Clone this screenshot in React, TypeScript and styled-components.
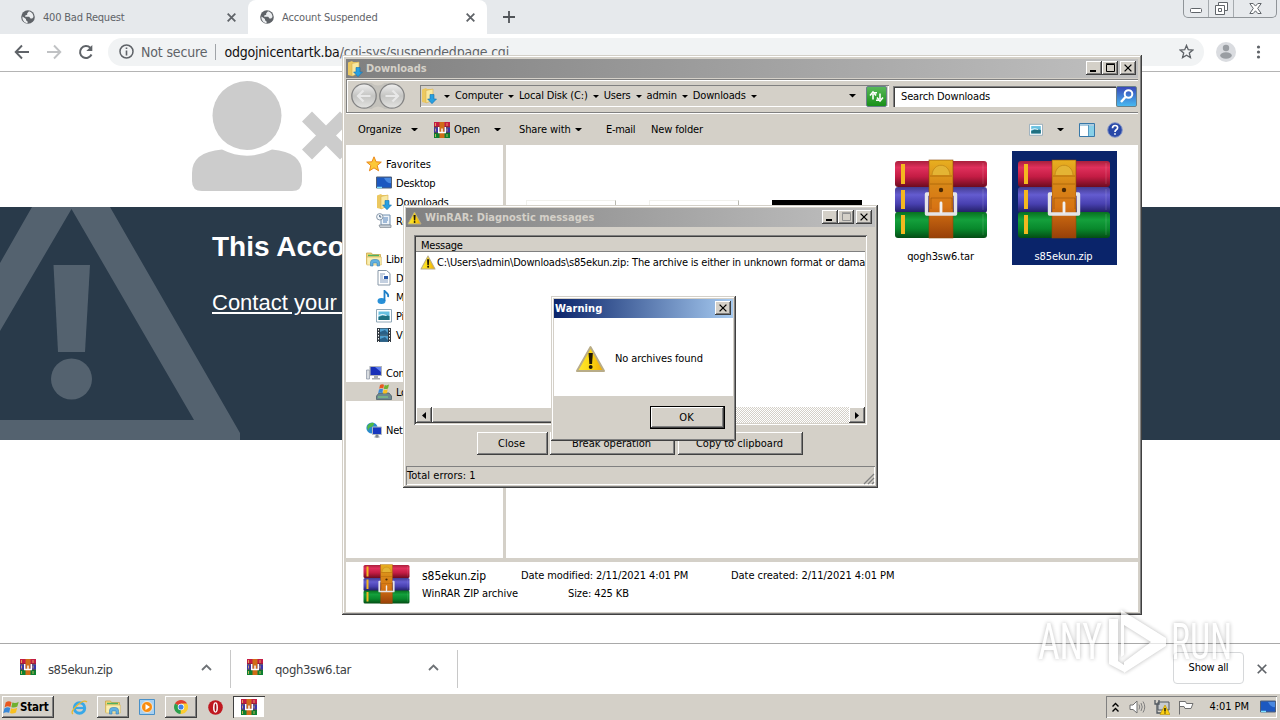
import React from "react";
import styled, { createGlobalStyle, css } from "styled-components";

const face = "#d4d0c8";

const raised = css`
  background: ${face};
  box-shadow: inset -1px -1px #404040, inset 1px 1px #fff, inset -2px -2px #808080;
`;

const GlobalStyle = createGlobalStyle`
  * {
    box-sizing: border-box;
  }
  body {
    margin: 0;
    overflow: hidden;
    font-family: "DejaVu Sans Condensed", "DejaVu Sans", sans-serif;
    font-stretch: condensed;
    font-size: 11px;
    letter-spacing: -0.2px;
    color: #000;
  }
  svg {
    display: block;
    flex: none;
  }
`;

const Desktop = styled.div`
  position: relative;
  width: 1280px;
  height: 720px;
  overflow: hidden;
  display: flex;
  flex-direction: column;
  background: #fff;
  white-space: nowrap;
`;

const Text = styled.span<{ $ls?: number; $size?: number; $color?: string }>`
  line-height: 16px;
  ${(p) => p.$ls !== undefined && `letter-spacing: ${p.$ls}px;`}
  ${(p) => p.$size && `font-size: ${p.$size}px;`}
  ${(p) => p.$color && `color: ${p.$color};`}
`;

const Spacer = styled.div<{ $w?: number }>`
  ${(p) => (p.$w ? `flex: none; width: ${p.$w}px;` : "flex: 1;")}
`;

/* ---------- browser ---------- */

const TabStrip = styled.div`
  height: 34px;
  flex: none;
  display: flex;
  background: #e6e9ec;
`;

const Tab = styled.div<{ $active?: boolean }>`
  width: ${(p) => (p.$active ? 239 : 248)}px;
  height: 34px;
  display: flex;
  align-items: center;
  padding: 0 12px 0 ${(p) => (p.$active ? 12 : 21)}px;
  border-radius: 8px 8px 0 0;
  background: ${(p) => (p.$active ? "#fff" : "transparent")};
  color: #5f6368;
  span {
    flex: 1;
    margin-left: 8px;
    padding-top: 1px;
  }
`;

const NewTab = styled.div`
  padding: 11px 0 0 16px;
  flex: 1;
`;

const WindowControls = styled.div`
  display: flex;
  width: 94px;
  height: 18px;
  margin-right: 3px;
  border: 1px solid #8f9498;
  border-top: 0;
  border-radius: 0 0 5px 5px;
  div {
    flex: 1;
    display: flex;
    align-items: center;
    justify-content: center;
    border-left: 1px solid #a5aaae;
  }
  div:first-child {
    border-left: 0;
  }
  div:last-child {
    flex: none;
    width: 43px;
  }
`;

const Toolbar = styled.div`
  height: 38px;
  flex: none;
  display: flex;
  align-items: center;
  padding: 0 14px 2px 14px;
  border-bottom: 1px solid #b4b4b4;
  gap: 16px;
`;

const Omnibox = styled.div`
  flex: 1;
  height: 28px;
  margin: 0 -4px 0 -2px;
  border-radius: 14px;
  background: #f1f3f4;
  display: flex;
  align-items: center;
  padding: 0 10px 0 11px;
  font-size: 14px;
  color: #5f6368;
  b {
    width: 1px;
    height: 16px;
    background: #a0a4a8;
    margin: 0 8px 0 8px;
  }
  em {
    font-style: normal;
    color: #111;
  }
`;

const Page = styled.div`
  height: 571px;
  flex: none;
  font-family: "Liberation Sans", Arial, sans-serif;
  letter-spacing: 0;
`;

const UserArea = styled.div`
  height: 135px;
  padding: 8px 0 0 192px;
`;

const Band = styled.div`
  height: 233px;
  background: #293a4a;
  color: #fff;
  display: flex;
  h1 {
    font-size: 28px;
    line-height: 32px;
    margin: 24px 0 25px;
  }
  a {
    font-size: 22px;
    line-height: 30px;
    text-decoration: underline;
    text-underline-offset: 2px;
  }
`;

const BandText = styled.div`
  margin-left: -28px;
`;

const DownloadBar = styled.div`
  height: 50px;
  flex: none;
  display: flex;
  border-top: 1px solid #a9a9a9;
  align-items: center;
`;

const DownloadItem = styled.div<{ $width: number }>`
  width: ${(p) => p.$width}px;
  height: 38px;
  border-right: 1px solid #c8c8c8;
  display: flex;
  align-items: center;
  padding: 0 18px 3px ${(p) => p.$width - 211}px;
  span {
    flex: 1;
    margin-left: 12px;
    padding-top: 5px;
  }
`;

const ShowAll = styled.div`
  width: 71px;
  height: 32px;
  margin: 0 13px 2px auto;
  border: 1px solid #d6d8da;
  border-radius: 4px;
  display: flex;
  align-items: center;
  justify-content: center;
`;

/* ---------- taskbar ---------- */

const Taskbar = styled.div`
  height: 27px;
  flex: none;
  background: ${face};
  border-top: 1px solid #fff;
  display: flex;
  align-items: center;
  padding: 0 3px 0 2px;
`;

const Start = styled.div`
  ${raised}
  width: 52px;
  height: 22px;
  display: flex;
  align-items: center;
  padding-left: 1px;
  margin-right: 9px;
  font-weight: bold;
  font-size: 11.5px;
`;

const TaskButton = styled.div<{ $state?: "raised" | "pressed" }>`
  width: 32px;
  height: 22px;
  margin-right: 2px;
  display: flex;
  align-items: center;
  justify-content: center;
  ${(p) => p.$state === "raised" && raised}
  ${(p) =>
    p.$state === "pressed" &&
    "background: #fff; box-shadow: inset 1px 1px #404040, inset -1px -1px #d4d0c8;"}
`;

const Tray = styled.div`
  margin-left: auto;
  width: 171px;
  height: 22px;
  box-shadow: inset 1px 1px #808080, inset -1px -1px #fff;
  display: flex;
  align-items: center;
  padding: 0 1px 0 6px;
  gap: 8px;
  svg:first-child {
    margin-right: 2px;
  }
  span {
    margin: 0 3px 0 auto;
  }
`;

/* ---------- classic windows ---------- */

const Window = styled.div<{ $x: number; $y: number; $w: number; $h: number; $pad?: string }>`
  position: absolute;
  left: ${(p) => p.$x}px;
  top: ${(p) => p.$y}px;
  width: ${(p) => p.$w}px;
  height: ${(p) => p.$h}px;
  padding: ${(p) => p.$pad || "3px"};
  display: flex;
  flex-direction: column;
  background: ${face};
  box-shadow: inset -1px -1px #404040, inset 1px 1px ${face}, inset -2px -2px #808080,
    inset 2px 2px #fff;
`;

const TitleBar = styled.div<{ $active?: boolean; $right?: number }>`
  height: 19px;
  flex: none;
  display: flex;
  align-items: center;
  padding: 0 ${(p) => p.$right || 2}px 0 1px;
  font-weight: bold;
  color: ${(p) => (p.$active ? "#fff" : "#d4d0c8")};
  background: ${(p) =>
    p.$active
      ? "linear-gradient(90deg, #0a246a, #a6caf0)"
      : "linear-gradient(90deg, #808080, #c0c0c0)"};
  span {
    flex: 1;
    margin-left: ${(p) => (p.$active ? 0 : 3)}px;
  }
`;

const Caption = styled.div`
  ${raised}
  width: 16px;
  height: 14px;
  margin-bottom: 2px;
  display: flex;
  align-items: center;
  justify-content: center;
  &:last-child {
    margin-left: 2px;
  }
`;

const Push = styled.div<{ $w: number; $default?: boolean }>`
  ${raised}
  width: ${(p) => p.$w}px;
  height: 23px;
  display: flex;
  align-items: center;
  justify-content: center;
  padding-right: 2px;
  letter-spacing: 0;
  ${(p) => p.$default && "border: 1px solid #000;"}
`;

/* ---------- explorer ---------- */

const NavBar = styled.div`
  height: 34px;
  flex: none;
  margin-top: 1px;
  display: flex;
  align-items: center;
  padding: 0 1px 0 3px;
  border: 1px solid #808080;
  border-right: 0;
  box-shadow: inset 1px 1px #fff, 0 1px #fff;
`;

const Address = styled.div`
  width: 469px;
  height: 22px;
  margin-left: 14px;
  display: flex;
  align-items: center;
  padding: 0 2px 0 1px;
  box-shadow: inset 1px 1px #808080, inset -1px -1px #fff;
  letter-spacing: -0.16px;
  svg {
    margin: 0 5px;
  }
  svg:first-child {
    margin: 0 2px 0 0;
  }
  span {
    padding-bottom: 2px;
  }
`;

const Search = styled.div`
  flex: 1;
  height: 21px;
  margin: 0 0 0 4px;
  padding: 3px 0 0 8px;
  background: #fff;
  box-shadow: inset 1px 1px #808080, inset 2px 2px #404040;
`;

const SquareButton = styled.div<{ $from: string; $to: string }>`
  width: 21px;
  height: 21px;
  display: flex;
  align-items: center;
  justify-content: center;
  border: 1px solid #68808a;
  border-radius: 2px;
  background: linear-gradient(${(p) => p.$from}, ${(p) => p.$to});
  && svg {
    margin: 0;
  }
`;

const CommandBar = styled.div`
  height: 32px;
  flex: none;
  display: flex;
  align-items: center;
  padding: 1px 15px 0 12px;
`;

const Command = styled.div<{ $w: number }>`
  width: ${(p) => p.$w}px;
  display: flex;
  align-items: center;
  gap: 4px;
`;

const Columns = styled.div`
  flex: 1;
  display: flex;
  background: #fff;
`;

const Sidebar = styled.div`
  width: 160px;
  border-right: 3px solid ${face};
  padding-top: 9px;
`;

const SideRow = styled.div<{ $child?: boolean; $selected?: boolean; $gap?: boolean }>`
  height: 19px;
  display: flex;
  align-items: center;
  gap: 4px;
  margin-top: ${(p) => (p.$gap ? 19 : 0)}px;
  padding-left: ${(p) => (p.$child ? 30 : 20)}px;
  background: ${(p) => (p.$selected ? face : "transparent")};
  span {
    padding-top: 2px;
  }
`;

const Files = styled.div`
  flex: 1;
  display: flex;
  justify-content: flex-end;
  gap: 18px;
  padding: 6px 21px 0 0;
`;

const FileCell = styled.div<{ $selected?: boolean }>`
  width: 105px;
  height: 114px;
  padding: 8px 2px 0 0;
  display: flex;
  flex-direction: column;
  align-items: center;
  gap: 10px;
  color: ${(p) => (p.$selected ? "#fff" : "#000")};
  background: ${(p) => (p.$selected ? "#0a246a" : "transparent")};
`;

const Thumb = styled.div<{ $dark?: boolean }>`
  width: 90px;
  height: 40px;
  margin: 41px 2px 0 0;
  background: ${(p) => (p.$dark ? "#000" : "#fff")};
  border: 1px solid ${(p) => (p.$dark ? "#000" : "#f0f0ec")};
  border-right-color: ${(p) => (p.$dark ? "#000" : "#b8b8b0")};
`;

const Details = styled.div`
  height: 54px;
  flex: none;
  border-top: 4px solid ${face};
  background: #fff;
  display: flex;
  align-items: flex-start;
  padding: 2px 0 0 17px;
`;

const DetailColumn = styled.div<{ $w: number; $indent?: number }>`
  width: ${(p) => p.$w}px;
  display: flex;
  flex-direction: column;
  gap: 2px;
  padding-top: 4px;
  letter-spacing: -0.1px;
  span + span {
    margin-left: ${(p) => p.$indent || 0}px;
  }
`;

/* ---------- diagnostic window ---------- */

const ListBox = styled.div`
  margin: 8px 8px 0;
  height: 190px;
  flex: none;
  background: #fff;
  padding: 2px;
  display: flex;
  flex-direction: column;
  overflow: hidden;
  box-shadow: inset 1px 1px #808080, inset -1px -1px #fff, inset 2px 2px #404040,
    inset -2px -2px ${face};
`;

const ListHeader = styled.div`
  height: 15px;
  padding-left: 5px;
  background: ${face};
  border-bottom: 1px solid #808080;
  span {
    line-height: 17px;
  }
`;

const ListRow = styled.div`
  display: flex;
  align-items: center;
  flex: none;
  height: 20px;
  padding-left: 4px;
  gap: 1px;
  overflow: hidden;
  span {
    padding-top: 1px;
  }
`;

const ScrollBar = styled.div`
  height: 16px;
  margin-top: auto;
  display: flex;
  background: repeating-conic-gradient(#fff 0 25%, ${face} 0 50%) 0 0 / 2px 2px;
`;

const ScrollPart = styled.div<{ $w: number }>`
  ${raised}
  width: ${(p) => p.$w}px;
  display: flex;
  align-items: center;
  justify-content: center;
  &:last-child {
    margin-left: auto;
  }
`;

const ButtonRow = styled.div`
  display: flex;
  gap: 3px;
  margin: 7px 0 0 71px;
  div + div {
    margin-left: -1px;
  }
  div + div + div {
    margin-left: 0;
  }
`;

const StatusBar = styled.div`
  height: 19px;
  margin-top: auto;
  padding: 2px 0 0 1px;
  display: flex;
  justify-content: space-between;
  align-items: flex-start;
  box-shadow: inset 1px 1px #808080, inset -1px -1px #fff;
`;

const WarningBody = styled.div`
  height: 78px;
  background: #fff;
  display: flex;
  align-items: center;
  padding: 3px 0 0 21px;
  gap: 9px;
`;

const WarningFooter = styled.div`
  flex: 1;
  display: flex;
  justify-content: flex-end;
  padding: 10px 8px 0 0;
`;

const Watermark = styled.svg`
  position: absolute;
  left: 1030px;
  top: 605px;
  filter: drop-shadow(0 0 2px rgba(0, 0, 0, 0.4));
  opacity: 0.7;
`;

/* ---------- icons ---------- */

const Globe = () => (
  <svg width="14" height="14" viewBox="0 0 14 14">
    <circle cx="7" cy="7" r="6.8" fill="#5f6368" />
    <path d="M1.5 6.5 5 9v1.2l1.6 1.4v1.6C3.4 13 .9 10 1.5 6.500ZM8 1.300 6.200 3.200v1.500L4.200 5.500v1.200h4l1.300 1.800h1.700L12.500 7c0-2.600-1.900-5.200-4.500-5.700Z" fill="#eceef0" />
  </svg>
);

const Cross = ({ size = 8, color = "#5f6368", width = 1.6 }) => (
  <svg width={size} height={size} viewBox="0 0 8 8">
    <path d="M.6.6l6.800 6.800M7.400.6.6 7.400" stroke={color} strokeWidth={width} />
  </svg>
);

const Arrow = ({ back = false, color = "#5f6368" }) => (
  <svg width="16" height="16" viewBox="0 0 16 16">
    <path
      d={back ? "M15 8H2M8 1.500 1.700 8 8 14.500" : "M1 8h13M8 1.500 14.300 8 8 14.500"}
      stroke={color}
      strokeWidth="1.900"
      fill="none"
    />
  </svg>
);

const Down = ({ size = 6 }) => (
  <svg width={size} height={size / 2} viewBox="0 0 8 4">
    <path d="M0 0h8L4 4Z" />
  </svg>
);

const Chevron = () => (
  <svg width="11" height="7" viewBox="0 0 11 7">
    <path d="M1 6l4.500-4.500L10 6" fill="none" stroke="#6e7276" strokeWidth="1.800" />
  </svg>
);

const Books = ({ w, h }: { w: number; h: number }) => (
  <svg width={w} height={h} viewBox="0 0 94 80" preserveAspectRatio="none">
    <defs>
      <linearGradient id="red" x2="0" y2="1">
        <stop offset="0" stopColor="#a8203c" />
        <stop offset=".25" stopColor="#e0305c" />
        <stop offset=".6" stopColor="#c41c44" />
        <stop offset="1" stopColor="#6c0c20" />
      </linearGradient>
      <linearGradient id="blue" x2="0" y2="1">
        <stop offset="0" stopColor="#443c90" />
        <stop offset=".3" stopColor="#645cd0" />
        <stop offset=".65" stopColor="#4840b0" />
        <stop offset="1" stopColor="#201c60" />
      </linearGradient>
      <linearGradient id="green" x2="0" y2="1">
        <stop offset="0" stopColor="#087020" />
        <stop offset=".3" stopColor="#14a03c" />
        <stop offset=".65" stopColor="#08882c" />
        <stop offset="1" stopColor="#044c14" />
      </linearGradient>
      <linearGradient id="strap" x2="0" y2="1">
        <stop offset="0" stopColor="#e8b020" />
        <stop offset=".3" stopColor="#d88818" />
        <stop offset=".6" stopColor="#d87414" />
        <stop offset="1" stopColor="#984008" />
      </linearGradient>
    </defs>
    <rect x="1" y="2" width="92" height="26" rx="3" fill="url(#red)" />
    <rect x="1" y="28" width="92" height="26" rx="3" fill="url(#blue)" />
    <rect x="1" y="53" width="92" height="26" rx="3" fill="url(#green)" />
    <path d="M7 5h4v20H7zM7 31h4v19H7zM7 56h4v19H7z" fill="#f4b820" />
    <path d="M89 4v21M89 30v21M89 55v21" stroke="#fff" strokeOpacity=".15" />
    <rect x="35" y="1" width="24" height="78" fill="url(#strap)" stroke="#8a4a08" strokeWidth=".6" />
    <path d="M36 17h22M36 25h22" stroke="#a86408" strokeWidth=".8" />
    <path d="M38 16c1-13 17-13 18 0" fill="#e4b434" stroke="#c08818" strokeWidth=".8" />
    <circle cx="47" cy="31" r="2.200" fill="#4a2804" />
    <path d="M35 35h-2.500v20h29V35H59" fill="none" stroke="#e4e4e8" strokeWidth="3.400" strokeLinejoin="round" />
    <path d="M37 50v-11h21v11" fill="none" stroke="#8a4a08" strokeOpacity=".5" />
    <path d="M47 44v9" stroke="#f0f0f0" strokeWidth="2.800" strokeLinecap="round" />
  </svg>
);

const RarSmall = () => (
  <svg width="16" height="16" viewBox="0 0 16 16">
    <path d="M0 0h16v5H0z" fill="#c41c44" />
    <path d="M0 5.500h16v5H0z" fill="#3c34a8" />
    <path d="M0 11h16v5H0z" fill="#0c8030" />
    <path d="M0 5.200h16M0 10.700h16" stroke="#2a2030" strokeWidth=".8" />
    <path d="M1.500 1v3M1.500 6.500v3M1.500 12v3M13 1v3M13 6.500v3M13 12v3" stroke="#e8c060" strokeWidth=".8" />
    <path d="M5.500 0h5v16h-5z" fill="#d06c18" />
    <path d="M4.700 5v5.500h6.600V5M8 6.500v3.500" stroke="#fff" strokeWidth="1.400" fill="none" />
  </svg>
);

const FolderDown = () => (
  <svg width="16" height="16" viewBox="0 0 16 16">
    <path d="M1 1.500 5 0l1 1h6v11L5 15 1 14Z" fill="#ecc860" />
    <path d="M5 2.500 12 1v11l-7 3Z" fill="#f8e8a0" stroke="#d8b050" strokeWidth=".6" />
    <path d="M9 6.500h4V11h2.500L11 15.700 6.600 11H9Z" fill="#28a0e0" stroke="#1470b0" strokeWidth=".6" />
  </svg>
);

const Libraries = () => (
  <svg width="16" height="16" viewBox="0 0 16 16">
    <path d="M.5 2h5l1 1.500h8V13H.5Z" fill="#f0d878" stroke="#c8a040" strokeWidth=".7" />
    <path d="M2 4.500h11" stroke="#50b060" strokeWidth="1.500" />
    <path d="M.8 6h14.500v8H.8z" fill="#faeeb0" stroke="#d4b458" strokeWidth=".6" />
    <path d="M4.500 15v-4a3 3 0 0 1 3-2.500h3a3 3 0 0 1 3 2.500v4h-2.500v-3H7v3Z" fill="#60b0e0" stroke="#3880b8" strokeWidth=".6" />
  </svg>
);

const Star = () => (
  <svg width="16" height="16" viewBox="0 0 16 16">
    <path d="m8 .8 2.100 5 5.200.3-4.100 3.400 1.400 5.300L8 11.900l-4.600 2.900 1.400-5.300L.7 6.100l5.200-.3Z" fill="#fcc838" stroke="#e88010" strokeWidth=".9" />
  </svg>
);

const Screen = () => (
  <svg width="16" height="16" viewBox="0 0 16 16">
    <path d="M.5 2h15v11H.5z" fill="#1c58c0" stroke="#506078" />
    <path d="M8 3h7v5Q11 9 8 3" fill="#4888e0" />
    <path d="M1 12.500h5" stroke="#80e0ff" strokeWidth="1.500" />
  </svg>
);

const Recent = () => (
  <svg width="16" height="16" viewBox="0 0 16 16">
    <path d="M5 2h9v10H5z" fill="#eef4fa" stroke="#7090b0" />
    <path d="M7 5h5M7 7h5M7 9h4" stroke="#5080b8" />
    <path d="M3 12h12v2.500H4z" fill="#c8d0d8" stroke="#808890" strokeWidth=".7" />
    <circle cx="3.800" cy="3.800" r="3.200" fill="#f4f8fc" stroke="#8898a8" />
    <path d="M3.800 2v2h1.500" stroke="#406080" fill="none" />
  </svg>
);

const Doc = () => (
  <svg width="16" height="16" viewBox="0 0 16 16">
    <path d="M2 .5h8.500l3.500 3V15H2Z" fill="#fff" stroke="#8898a8" />
    <path d="M4 4h5M4 6h3M4 8h3M4 10h8M4 12h8" stroke="#88a0c0" />
    <path d="M8 6h4v3H8z" fill="#2858a8" />
  </svg>
);

const Music = () => (
  <svg width="16" height="16" viewBox="0 0 16 16">
    <ellipse cx="5.500" cy="12" rx="4" ry="3" fill="#2890d8" />
    <path d="M8.500 12V1c.4 3 5 3 3.500 7" fill="none" stroke="#2080c8" strokeWidth="1.800" />
  </svg>
);

const Picture = ({ w = 16 }) => (
  <svg width={w} height={w} viewBox="0 0 16 16">
    <path d="M.5 1.500h15v12.500H.5z" fill="#fff" stroke="#90a8b8" />
    <path d="M2.500 3.500h11v8.500h-11z" fill="#68c0e0" />
    <path d="M2.500 9q5-3 11-1v4h-11z" fill="#207080" />
    <path d="M2.500 7.500q4-2 8 0" stroke="#fff" fill="none" />
  </svg>
);

const Film = () => (
  <svg width="16" height="16" viewBox="0 0 16 16">
    <path d="M1 1h14v14H1z" fill="#303840" />
    <path d="M4 1.500h8v6H4zM4 8.500h8v6H4z" fill="#50a0d0" />
    <path d="M4 5l5-2 3 3v1.500H4zM4 12l5-2 3 3v1.500H4z" fill="#286088" />
    <path d="M2.500 2v13M13.500 2v13" stroke="#fff" strokeDasharray="1.500 1.500" />
  </svg>
);

const Computer = () => (
  <svg width="16" height="16" viewBox="0 0 16 16">
    <path d="M.5 5h3v9h-3z" fill="#d8dce0" stroke="#8890a0" strokeWidth=".7" />
    <path d="M4 1.500h11.500v9H4z" fill="#1830b8" stroke="#b0b4b8" strokeWidth="1.200" />
    <path d="M9 2h6v5z" fill="#6080f0" />
    <path d="M8 11h4v2H8zM6 13h8v1.500H6z" fill="#a8acb0" />
  </svg>
);

const WinFlag = () => (
  <svg width="17" height="17" viewBox="0 0 16 16">
    <path d="M2.500 3.200q3-2 5.500-.2L7 7.500q-3-1.500-5.500.5Z" fill="#e85820" />
    <path d="M8.800 3.200q3 1.200 6-.7L13.500 7q-2.700 1.700-5.700.7Z" fill="#70b030" />
    <path d="M1.300 8.900q3-2 5.500-.4l-1 4.500Q3 11.500.2 13.500Z" fill="#3888d8" />
    <path d="M7.600 8.700q3 1.300 5.700-.5L12.200 12.700q-3 1.800-5.600.5Z" fill="#f8c020" />
  </svg>
);

const Disk = () => (
  <svg width="16" height="16" viewBox="0 0 16 16">
    <path d="M3 9h10l2.500 3v3.500H.5V12Z" fill="#6c8890" stroke="#405860" strokeWidth=".7" />
    <path d="M2 13h10" stroke="#80d880" />
    <path d="M4 1q2-1.500 4-.3L7.300 4.500Q5 3.500 3.200 4.800Z" fill="#e85820" />
    <path d="M8.700 1q2 1 4.300-.4L12 4.500q-2 1-4.200.2Z" fill="#70b030" />
    <path d="M3 5.500q2-1.500 4-.3L6.300 9Q4 8 2.200 9.300Z" fill="#3888d8" />
    <path d="M7.700 5.500q2 1 4-.2L11 9q-2 1-4.200.2Z" fill="#f8c020" />
  </svg>
);

const Network = () => (
  <svg width="16" height="16" viewBox="0 0 16 16">
    <circle cx="6" cy="6" r="5.600" fill="#2888d0" />
    <path d="M2 3q3-3 6-2Q8 4 5 5T3 9Q0 6 2 3" fill="#50b848" />
    <path d="M6.500 5h9v7.500h-9z" fill="#1838c0" stroke="#b0b8c0" />
    <path d="M10 13h2v2h-2zM8.500 15h5" stroke="#808890" fill="#808890" />
  </svg>
);

const Alert = ({ w = 16, h = 16 }) => (
  <svg width={w} height={h} viewBox="0 0 32 28" preserveAspectRatio="none">
    <defs>
      <linearGradient id="alert">
        <stop offset="0" stopColor="#ffe838" />
        <stop offset=".5" stopColor="#fcd810" />
        <stop offset="1" stopColor="#f0a808" />
      </linearGradient>
    </defs>
    <path d="M16 2 30 26H2Z" fill="url(#alert)" stroke="#b8ac88" strokeWidth="2" strokeLinejoin="round" />
    <path d="M14 8h4.400l-.8 11h-2.800Z" fill="#201808" />
    <circle cx="16.200" cy="22" r="2" fill="#201808" />
  </svg>
);

const NavArrows = () => (
  <svg width="56" height="28" viewBox="0 0 56 28">
    <defs>
      <linearGradient id="orb" x2="0" y2="1">
        <stop offset="0" stopColor="#f0f0f0" />
        <stop offset=".5" stopColor="#c4c4c2" />
        <stop offset="1" stopColor="#e4e4e2" />
      </linearGradient>
    </defs>
    <path d="M14 1h28v26H14z" fill="#c4c2bc" />
    <path d="M20 0q8 7 16 0ZM20 28q8-7 16 0Z" fill={face} />
    {[14, 42].map((x) => (
      <circle key={x} cx={x} cy="14" r="12.200" fill="url(#orb)" stroke="#848484" strokeWidth="1.300" />
    ))}
    <path d="M20.500 14H8.500M13.500 8.500 8 14l5.500 5.500M35.500 14h12M42.500 8.500 48 14l-5.500 5.500" stroke="#e8e8e8" strokeWidth="2.200" fill="none" />
  </svg>
);

const CaptionButtons = ({ only = false, dim = false }) => (
  <>
    {!only && (
      <>
        <Caption>
          <svg width="8" height="8"><path d="M0 6h6v2H0z" /></svg>
        </Caption>
        <Caption>
          <svg width="9" height="9"><path d="M.5 1.500h8v7h-8zM0 .8h9" fill="none" stroke={dim ? "#909090" : "#000"} /></svg>
        </Caption>
      </>
    )}
    <Caption>
      <Cross color="#000" width={1.3} />
    </Caption>
  </>
);

const App = () => {
  return (
    <Desktop>
      <GlobalStyle />

      <TabStrip>
        <Tab>
          <Globe />
          <Text $ls={-0.2}>400 Bad Request</Text>
          <Cross size={9} />
        </Tab>
        <Tab $active>
          <Globe />
          <Text $ls={-0.15}>Account Suspended</Text>
          <Cross size={9} />
        </Tab>
        <NewTab>
          <svg width="12" height="12"><path d="M6 0v12M0 6h12" stroke="#505458" strokeWidth="1.800" /></svg>
        </NewTab>
        <WindowControls>
          <div>
            <svg width="12" height="12"><rect x=".5" y="5.500" width="11" height="4" rx="1" fill="#fff" stroke="#60656a" /></svg>
          </div>
          <div>
            <svg width="13" height="13" fill="#fff" stroke="#60656a">
              <path d="M3.500.5h9v8h-9z" />
              <path d="M.5 3.500h9v9h-9zM3.500 6.500h3v3h-3z" />
            </svg>
          </div>
          <div>
            <svg width="13" height="11" fill="#fff" stroke="#60656a">
              <path d="M.8.5h3.400l2.300 2.600L8.800.5h3.400L8.700 5.400l3.500 5.100H8.800L6.500 7.800l-2.300 2.700H.8l3.500-5.100Z" />
            </svg>
          </div>
        </WindowControls>
      </TabStrip>

      <Toolbar>
        <Arrow back />
        <Arrow color="#c0c2c4" />
        <svg width="16" height="16" viewBox="0 0 16 16">
          <path d="M13.500 10.500a6 6 0 1 1-1.200-6.700" fill="none" stroke="#5f6368" strokeWidth="2" />
          <path d="M14.300 1v6h-6Z" fill="#5f6368" />
        </svg>
        <Omnibox>
          <svg width="15" height="15" viewBox="0 0 15 15">
            <circle cx="7.500" cy="7.500" r="6.500" fill="none" stroke="#5f6368" strokeWidth="1.500" />
            <path d="M7.500 3.500v1.600M7.500 6.500v5" stroke="#5f6368" strokeWidth="1.600" />
          </svg>
          <Spacer $w={7} />
          <Text $ls={-0.15}>Not secure</Text>
          <b />
          <Text $ls={-0.2}>
            <em>odgojnicentartk.ba</em>/cgi-sys/suspendedpage.cgi
          </Text>
          <Spacer />
          <svg width="15" height="15" viewBox="0 0 16 16">
            <path d="m8 1.500 1.900 4.600 4.800.4-3.700 3.200 1.200 4.800L8 11.900l-4.200 2.600L5 9.700 1.300 6.500l4.800-.4Z" fill="none" stroke="#5f6368" strokeWidth="1.400" />
          </svg>
        </Omnibox>
        <svg width="20" height="20" viewBox="0 0 20 20">
          <circle cx="10" cy="10" r="10" fill="#dadce0" />
          <circle cx="10" cy="6" r="3.200" fill="#999da2" />
          <ellipse cx="10" cy="13.500" rx="5.800" ry="3.200" fill="#999da2" />
        </svg>
        <svg width="14" height="16" viewBox="0 0 14 16" fill="#5f6368">
          <circle cx="6.500" cy="3" r="1.600" />
          <circle cx="6.500" cy="8" r="1.600" />
          <circle cx="6.500" cy="13" r="1.600" />
        </svg>
      </Toolbar>

      <Page>
        <UserArea>
          <svg width="170" height="112" viewBox="0 0 170 112" fill="#ccc">
            <circle cx="55" cy="35.500" r="34.500" />
            <path d="M30 69.500Q55 82 80 69.500Q110 72 110 93v8q0 10-10 10H10Q0 111 0 101v-8Q0 72 30 69.500Z" />
            <path d="m120 31.500 14 14 14-14 10 10-14 14 14 14-10 10-14-14-14 14-10-10 14-14-14-14Z" />
          </svg>
        </UserArea>
        <Band>
          <svg width="240" height="233" viewBox="0 0 240 233" fill="#54626f">
            <path fillRule="evenodd" d="M32 0h78l130 226v7H0V56ZM71.500 2 0 124v89h194Z" />
            <path d="M53.500 58h36.500l-5 87H58Z" />
            <circle cx="71.500" cy="172" r="20.500" />
          </svg>
          <BandText>
            <h1>This Account Has Been Suspended</h1>
            <a>Contact your hosting provider</a>
          </BandText>
        </Band>
      </Page>

      <DownloadBar>
        <DownloadItem $width={231}>
          <RarSmall />
          <Text $size={13} $ls={-0.5} $color="#3c4043">s85ekun.zip</Text>
          <Chevron />
        </DownloadItem>
        <DownloadItem $width={227}>
          <RarSmall />
          <Text $size={13} $ls={-0.35} $color="#3c4043">qogh3sw6.tar</Text>
          <Chevron />
        </DownloadItem>
        <ShowAll>
          <Text $ls={-0.2}>Show all</Text>
        </ShowAll>
        <Cross size={10} width={1.4} />
        <Spacer $w={13} />
      </DownloadBar>

      <Taskbar>
        <Start>
          <WinFlag />
          Start
        </Start>
        <TaskButton>
          <svg width="17" height="17" viewBox="0 0 17 17">
            <circle cx="8.500" cy="9" r="5.200" fill="none" stroke="#38a8e8" strokeWidth="3" />
            <path d="M4 9h10" stroke="#38a8e8" strokeWidth="2.200" />
            <path d="M2 15Q-1 13 6 6.500T16 3" fill="none" stroke="#e8b830" strokeWidth="1.300" />
          </svg>
        </TaskButton>
        <TaskButton $state="raised">
          <Libraries />
        </TaskButton>
        <TaskButton>
          <svg width="16" height="16" viewBox="0 0 16 16">
            <path d="M.5.5h15v15H.5z" fill="#a8d0f0" stroke="#4890c8" />
            <circle cx="8" cy="8" r="5.500" fill="#f88c10" stroke="#fff" strokeWidth=".7" />
            <path d="M6.500 5v6L11 8Z" fill="#fff" />
          </svg>
        </TaskButton>
        <TaskButton $state="raised">
          <svg width="14" height="14" viewBox="0 0 16 16">
            <path d="M8 8 1.100 4A8 8 0 0 1 14.900 4Z" fill="#e04030" />
            <path d="M8 8 1.100 4A8 8 0 0 0 7.500 16L11 10Z" fill="#2ca04c" />
            <path d="M8 8 7.500 16A8 8 0 0 0 14.900 4H8Z" fill="#fccc30" />
            <circle cx="8" cy="8" r="3.700" fill="#fff" />
            <circle cx="8" cy="8" r="2.900" fill="#4080e8" />
          </svg>
        </TaskButton>
        <TaskButton>
          <svg width="15" height="15" viewBox="0 0 16 16">
            <circle cx="8" cy="8" r="7.800" fill="#c01820" />
            <ellipse cx="8" cy="8" rx="2.600" ry="5.500" fill="#fff" />
            <ellipse cx="8" cy="8" rx="1" ry="4.300" fill="#a01018" />
          </svg>
        </TaskButton>
        <TaskButton $state="pressed">
          <RarSmall />
        </TaskButton>
        <Tray>
          <svg width="7" height="10"><path d="M.5 4.500l3-3 3 3M.5 9.500l3-3 3 3" fill="none" stroke="#000" strokeWidth="1.400" /></svg>
          <svg width="17" height="14" viewBox="0 0 17 14">
            <path d="M1 5h3l4-4v12L4 9.500H1Z" fill="#fff" stroke="#707070" />
            <path d="M10 4.500q1.500 2.500 0 5M12 3q2.500 4 0 8M14 1.500q3.500 5.500 0 11" fill="none" stroke="#808080" />
          </svg>
          <svg width="16" height="16" viewBox="0 0 16 16">
            <path d="M4 3h11v8H4z" fill="#c8ccd0" stroke="#505860" />
            <path d="M1 1v4h4V1M3 5v9h5" fill="none" stroke="#505860" strokeWidth="1.300" />
            <path d="m11 6 5 9.500H6Z" fill="#fcd010" stroke="#b89000" strokeWidth=".6" />
            <path d="M11 9v3.500M11 13.500v1" stroke="#000" strokeWidth="1.300" />
          </svg>
          <svg width="16" height="15" viewBox="0 0 16 15">
            <path d="M1.500 1v13.500M1.500 1.500h6l1 2H15l-2 5H7l-1-2H1.500" fill="#fff" stroke="#707070" />
          </svg>
          <Text $ls={-0.05}>4:01 PM</Text>
          <Screen />
        </Tray>
      </Taskbar>

      <Window $x={342} $y={55} $w={800} $h={560} $pad="4px 4px 3px">
        <TitleBar>
          <FolderDown />
          <Text $ls={-0.05}>Downloads</Text>
          <CaptionButtons />
        </TitleBar>
        <NavBar>
          <NavArrows />
          <Address>
            <FolderDown />
            <Down />
            <span>Computer</span>
            <Down />
            <span>Local Disk (C:)</span>
            <Down />
            <span>Users</span>
            <Down />
            <span>admin</span>
            <Down />
            <span>Downloads</span>
            <Down />
            <Spacer />
            <Down size={7} />
            <Spacer $w={5} />
            <SquareButton $from="#58b858" $to="#189018">
              <svg width="17" height="15" viewBox="0 0 17 15">
                <path d="M5 10.500V5M2 6.500l3-3.500 3 3.500M5 3.800h4M12 4.500V10M9 8.500l3 3.500 3-3.500M12 11.200H8" fill="none" stroke="#fff" strokeWidth="1.600" />
              </svg>
            </SquareButton>
          </Address>
          <Search>
            <Text $ls={-0.15}>Search Downloads</Text>
          </Search>
          <SquareButton $from="#3848b8" $to="#48b8f0">
            <svg width="16" height="16" viewBox="0 0 16 16">
              <circle cx="9.500" cy="6" r="3.800" fill="none" stroke="#fff" strokeWidth="2" />
              <path d="M6.500 9 2 14" stroke="#fff" strokeWidth="2.400" />
            </svg>
          </SquareButton>
        </NavBar>
        <CommandBar>
          <Command $w={76}>
            <Text $ls={-0.1}>Organize</Text>
            <Spacer $w={1} />
            <Down size={7} />
          </Command>
          <Command $w={85}>
            <RarSmall />
            <Text $ls={-0.15}>Open</Text>
            <Spacer $w={6} />
            <Down size={7} />
          </Command>
          <Command $w={87}>
            <Text $ls={-0.1}>Share with</Text>
            <Down size={7} />
          </Command>
          <Command $w={45}>
            <Text $ls={-0.3}>E-mail</Text>
          </Command>
          <Text $ls={-0.15}>New folder</Text>
          <Spacer />
          <Command $w={50}>
            <Picture w={14} />
            <Spacer $w={6} />
            <Down size={7} />
          </Command>
          <Command $w={28}>
            <svg width="16" height="14" viewBox="0 0 16 14">
              <path d="M.5.5h15v13H.5z" fill="#fff" stroke="#3878a8" />
              <path d="M10 3h5v10h-5z" fill="#88d0e8" />
              <path d="M1 2h14M9.500 2v11" stroke="#5898c0" />
            </svg>
          </Command>
          <svg width="16" height="16" viewBox="0 0 16 16">
            <circle cx="8" cy="8" r="7.300" fill="#2848a8" stroke="#8898c8" />
            <path d="M5.500 6.200q0-2.700 2.600-2.700t2.500 2.300q0 1.200-1.300 2T8 10M8 11.300v1.500" stroke="#fff" strokeWidth="1.700" fill="none" />
          </svg>
        </CommandBar>
        <Columns>
          <Sidebar>
            <SideRow><Star /><Text $ls={0.05}>Favorites</Text></SideRow>
            <SideRow $child><Screen /><Text>Desktop</Text></SideRow>
            <SideRow $child><FolderDown /><Text>Downloads</Text></SideRow>
            <SideRow $child><Recent /><Text>Recent Places</Text></SideRow>
            <SideRow $gap><Libraries /><Text>Libraries</Text></SideRow>
            <SideRow $child><Doc /><Text>Documents</Text></SideRow>
            <SideRow $child><Music /><Text>Music</Text></SideRow>
            <SideRow $child><Picture /><Text>Pictures</Text></SideRow>
            <SideRow $child><Film /><Text>Videos</Text></SideRow>
            <SideRow $gap><Computer /><Text>Computer</Text></SideRow>
            <SideRow $child $selected><Disk /><Text>Local Disk (C:)</Text></SideRow>
            <SideRow $gap><Network /><Text>Network</Text></SideRow>
          </Sidebar>
          <Files>
            <FileCell><Thumb /></FileCell>
            <FileCell><Thumb /></FileCell>
            <FileCell><Thumb $dark /></FileCell>
            <FileCell>
              <Books w={94} h={80} />
              <Text $ls={-0.1}>qogh3sw6.tar</Text>
            </FileCell>
            <FileCell $selected>
              <Books w={94} h={80} />
              <Text $ls={-0.1}>s85ekun.zip</Text>
            </FileCell>
          </Files>
        </Columns>
        <Details>
          <Books w={47} h={40} />
          <Spacer $w={12} />
          <DetailColumn $w={99}>
            <Text $size={12} $ls={-0.05}>s85ekun.zip</Text>
            <Text $ls={-0.05}>WinRAR ZIP archive</Text>
          </DetailColumn>
          <DetailColumn $w={210} $indent={47}>
            <Text>Date modified: 2/11/2021 4:01 PM</Text>
            <Text>Size: 425 KB</Text>
          </DetailColumn>
          <DetailColumn $w={180}>
            <Text $ls={-0.04}>Date created: 2/11/2021 4:01 PM</Text>
          </DetailColumn>
        </Details>
      </Window>

      <Window $x={403} $y={205} $w={475} $h={283}>
        <TitleBar $right={3}>
          <Alert w={15} h={14} />
          <Text $ls={0}>WinRAR: Diagnostic messages</Text>
          <CaptionButtons dim />
        </TitleBar>
        <ListBox>
          <ListHeader>
            <Text $ls={-0.25}>Message</Text>
          </ListHeader>
          <ListRow>
            <Alert w={16} h={15} />
            <Text $ls={-0.19}>
              C:\Users\admin\Downloads\s85ekun.zip: The archive is either in unknown format or damaged
            </Text>
          </ListRow>
          <ScrollBar>
            <ScrollPart $w={16}><svg width="4" height="7"><path d="M4 0v7L0 3.500Z" /></svg></ScrollPart>
            <ScrollPart $w={250} />
            <ScrollPart $w={16}><svg width="4" height="7"><path d="M0 0v7l4-3.500Z" /></svg></ScrollPart>
          </ScrollBar>
        </ListBox>
        <ButtonRow>
          <Push $w={71}>Close</Push>
          <Push $w={125}>Break operation</Push>
          <Push $w={125}>Copy to clipboard</Push>
        </ButtonRow>
        <StatusBar>
          <Text $ls={0.05}>Total errors: 1</Text>
          <svg width="14" height="17"><path d="M3 16 13 6M7 16l6-6M11 16l2-2" stroke="#808080" strokeWidth="1.300" /></svg>
        </StatusBar>
      </Window>

      <Window $x={551} $y={296} $w={185} $h={145}>
        <TitleBar $active>
          <Text $ls={0.1}>Warning</Text>
          <CaptionButtons only />
        </TitleBar>
        <WarningBody>
          <Alert w={31} h={28} />
          <Text $ls={-0.1}>No archives found</Text>
        </WarningBody>
        <WarningFooter>
          <Push $w={75} $default>OK</Push>
        </WarningFooter>
      </Window>

      <Watermark width="210" height="75" fill="#fff" fontFamily="Liberation Sans Narrow, Roboto, sans-serif" fontSize="50">
        <text x="8" y="54" textLength="64" lengthAdjust="spacingAndGlyphs">ANY</text>
        <path d="M79 14h9v42l6 4v7l-15-8ZM91 5l45 28v8L94 68V57l27-20-27-17v30l-3 2Z" />
        <text x="141" y="54" textLength="61" lengthAdjust="spacingAndGlyphs">RUN</text>
      </Watermark>
    </Desktop>
  );
};

export default App;
